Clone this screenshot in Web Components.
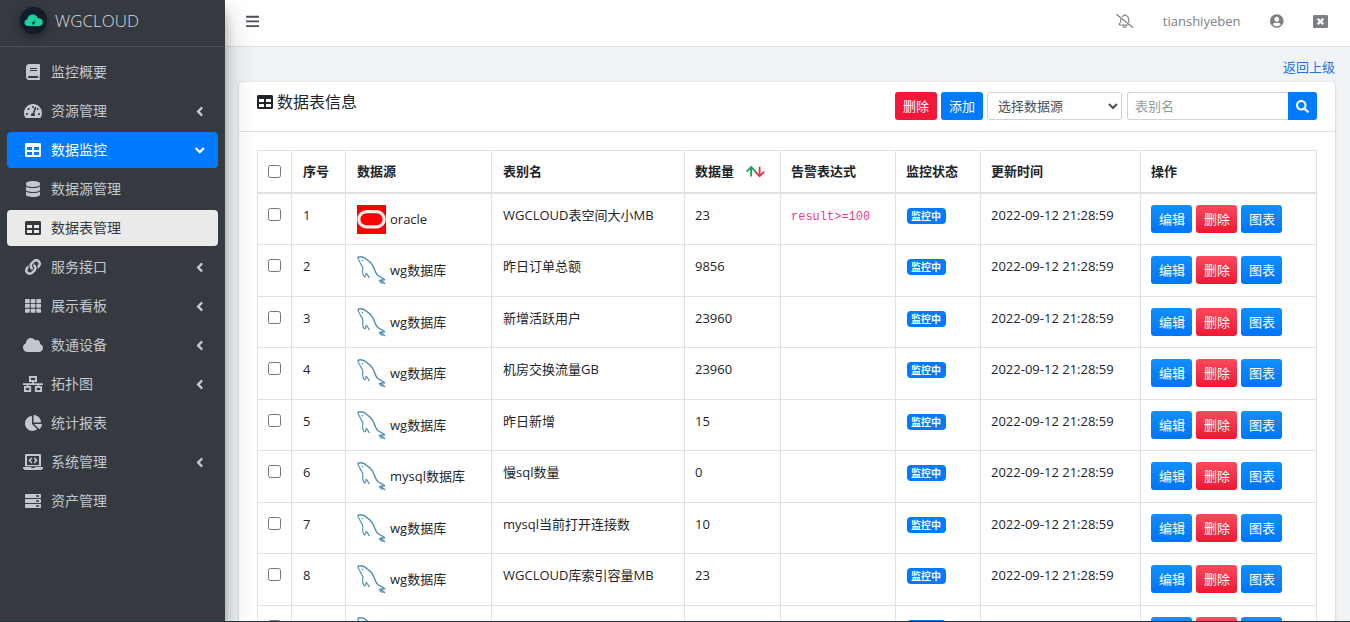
<!DOCTYPE html>
<html lang="zh-CN">
<head>
<meta charset="utf-8">
<title>WGCLOUD</title>
<style>
html, body { margin: 0; height: 100%; }
body { font: 13px/20px "Open Sans", "Noto Sans CJK SC", sans-serif; color: #212529; background: #f1f4f7; }
</style>
</head>
<body>
<wg-app>
  <wg-sidebar slot="side">
    <wg-nav-item icon="book">监控概要</wg-nav-item>
    <wg-nav-item icon="gauge" more>资源管理</wg-nav-item>
    <wg-nav-item icon="table" more state="open">数据监控</wg-nav-item>
    <wg-nav-item icon="database">数据源管理</wg-nav-item>
    <wg-nav-item icon="table" state="current">数据表管理</wg-nav-item>
    <wg-nav-item icon="link" more>服务接口</wg-nav-item>
    <wg-nav-item icon="grid" more>展示看板</wg-nav-item>
    <wg-nav-item icon="cloud" more>数通设备</wg-nav-item>
    <wg-nav-item icon="network" more>拓扑图</wg-nav-item>
    <wg-nav-item icon="pie">统计报表</wg-nav-item>
    <wg-nav-item icon="laptop" more>系统管理</wg-nav-item>
    <wg-nav-item icon="server">资产管理</wg-nav-item>
  </wg-sidebar>
  <wg-topbar slot="top">tianshiyeben</wg-topbar>
  <wg-card>
    <span slot="title">数据表信息</span>
    <wg-tools slot="tools"></wg-tools>
    <wg-table></wg-table>
  </wg-card>
</wg-app>

<script>
const ICONS = {
  book: [448, '<path d="M448 360V24c0-13.3-10.7-24-24-24H96C43 0 0 43 0 96v320c0 53 43 96 96 96h328c13.3 0 24-10.7 24-24v-16c0-7.5-3.5-14.3-8.9-18.7-4.2-15.4-4.2-59.3 0-74.7 5.4-4.3 8.9-11.1 8.9-18.6zM128 134c0-3.3 2.7-6 6-6h212c3.3 0 6 2.7 6 6v20c0 3.3-2.7 6-6 6H134c-3.3 0-6-2.7-6-6v-20zm0 64c0-3.3 2.7-6 6-6h212c3.3 0 6 2.7 6 6v20c0 3.3-2.7 6-6 6H134c-3.3 0-6-2.7-6-6v-20zm253.4 250H96c-17.7 0-32-14.3-32-32 0-17.6 14.4-32 32-32h285.4c-1.9 17.1-1.9 46.9 0 64z"/>'],
  gauge: [576, '<path d="M288 32C128.94 32 0 160.94 0 320c0 52.8 14.25 102.26 39.06 144.8 5.61 9.62 16.3 15.2 27.44 15.2h443c11.14 0 21.83-5.58 27.44-15.2C561.75 422.26 576 372.8 576 320c0-159.06-128.94-288-288-288zm0 64c14.71 0 26.58 10.13 30.32 23.65-1.11 2.26-2.64 4.23-3.45 6.67l-9.22 27.67c-5.13 3.49-10.97 6.01-17.64 6.01-17.67 0-32-14.33-32-32S270.33 96 288 96zM96 384c-17.67 0-32-14.33-32-32s14.33-32 32-32 32 14.33 32 32-14.33 32-32 32zm48-160c-17.67 0-32-14.33-32-32s14.33-32 32-32 32 14.33 32 32-14.33 32-32 32zm246.77-72.41l-61.33 184C343.13 347.33 352 364.54 352 384c0 11.72-3.38 22.55-8.88 32H232.88c-5.5-9.45-8.88-20.28-8.88-32 0-33.94 26.5-61.43 59.9-63.59l61.34-184.01c4.17-12.56 17.73-19.45 30.36-15.17 12.57 4.19 19.35 17.79 15.17 30.36zm14.66 57.2l15.52-46.55c3.47-1.29 7.13-2.23 11.05-2.23 17.67 0 32 14.33 32 32s-14.33 32-32 32c-11.38-.01-20.89-6.28-26.57-15.22zM480 384c-17.67 0-32-14.33-32-32s14.33-32 32-32 32 14.33 32 32-14.33 32-32 32z"/>'],
  table: [512, '<path d="M464 32H48C21.49 32 0 53.49 0 80v352c0 26.51 21.49 48 48 48h416c26.51 0 48-21.49 48-48V80c0-26.51-21.49-48-48-48zM224 416H64v-96h160v96zm0-160H64v-96h160v96zm224 160H288v-96h160v96zm0-160H288v-96h160v96z"/>'],
  database: [448, '<path d="M448 73.143v45.714C448 159.143 347.667 192 224 192S0 159.143 0 118.857V73.143C0 32.857 100.333 0 224 0s224 32.857 224 73.143zM448 176v102.857C448 319.143 347.667 352 224 352S0 319.143 0 278.857V176c48.125 33.143 136.208 48.572 224 48.572S399.874 209.143 448 176zm0 160v102.857C448 479.143 347.667 512 224 512S0 479.143 0 438.857V336c48.125 33.143 136.208 48.572 224 48.572S399.874 369.143 448 336z"/>'],
  link: [512, '<path d="M326.612 185.391c59.747 59.809 58.927 155.698.36 214.59-.11.12-.24.25-.36.37l-67.2 67.2c-59.27 59.27-155.699 59.262-214.96 0-59.27-59.26-59.27-155.7 0-214.96l37.106-37.106c9.84-9.84 26.786-3.3 27.294 10.606.648 17.722 3.826 35.527 9.69 52.721 1.986 5.822.567 12.262-3.783 16.612l-13.087 13.087c-28.026 28.026-28.905 73.66-1.155 101.96 28.024 28.579 74.086 28.749 102.325.51l67.2-67.19c28.191-28.191 28.073-73.757 0-101.83-3.701-3.694-7.429-6.564-10.341-8.569a16.037 16.037 0 0 1-6.947-12.606c-.396-10.567 3.348-21.456 11.698-29.806l21.054-21.055c5.521-5.521 14.182-6.199 20.584-1.731a152.482 152.482 0 0 1 20.522 17.197zM467.547 44.449c-59.261-59.262-155.69-59.27-214.96 0l-67.2 67.2c-.12.12-.25.25-.36.37-58.566 58.892-59.387 154.781.36 214.59a152.454 152.454 0 0 0 20.521 17.196c6.402 4.468 15.064 3.789 20.584-1.731l21.054-21.055c8.35-8.35 12.094-19.239 11.698-29.806a16.037 16.037 0 0 0-6.947-12.606c-2.912-2.005-6.64-4.875-10.341-8.569-28.073-28.073-28.191-73.639 0-101.83l67.2-67.19c28.239-28.239 74.3-28.069 102.325.51 27.75 28.3 26.872 73.934-1.155 101.96l-13.087 13.087c-4.35 4.35-5.769 10.79-3.783 16.612 5.864 17.194 9.042 34.999 9.69 52.721.509 13.906 17.454 20.446 27.294 10.606l37.106-37.106c59.271-59.259 59.271-155.699.001-214.959z"/>'],
  grid: [512, [32, 187, 341].map(y => [0, 181, 362].map(x => `<rect x="${x}" y="${y}" width="150" height="128" rx="20"/>`).join('')).join('')],
  cloud: [640, '<path d="M537.6 226.6c4.1-10.7 6.4-22.4 6.4-34.6 0-53-43-96-96-96-19.7 0-38.1 6-53.3 16.2C367 64.2 315.3 32 256 32c-88.4 0-160 71.6-160 160 0 2.7.1 5.4.2 8.1C40.2 219.8 0 273.2 0 336c0 79.5 64.5 144 144 144h368c70.7 0 128-57.3 128-128 0-61.9-44-113.6-102.4-125.4z"/>'],
  network: [640, '<g fill="none" stroke="currentColor" stroke-width="60"><rect x="222" y="30" width="196" height="132"/><rect x="62" y="350" width="168" height="132"/><rect x="410" y="350" width="168" height="132"/><path stroke-width="56" d="M0 256h640M320 170v86M146 256v90M494 256v90"/></g>'],
  pie: [544, '<path d="M527.79 288H290.5l158.03 158.03c6.04 6.04 15.98 6.53 22.19.68 38.7-36.46 65.32-85.61 73.13-140.86 1.34-9.46-6.51-17.85-16.06-17.85zm-15.83-64.8C503.72 103.74 408.26 8.28 288.8.04 279.68-.59 272 7.1 272 16.24V240h223.77c9.14 0 16.82-7.68 16.19-16.8zM224 288V50.71c0-9.55-8.39-17.4-17.84-16.06C86.99 51.49-4.1 155.6.14 280.37 4.5 408.51 114.83 513.59 243.03 511.98c50.4-.63 96.97-16.87 135.26-44.03 7.9-5.6 8.42-17.23 1.57-24.08L224 288z"/>'],
  laptop: [640, '<path d="M0 416h255c2 20 14 32 34 32h62c18 0 34-14 33-32h256v16c0 44-36 80-80 80H80c-44 0-80-36-80-80z"/><path fill="none" stroke="currentColor" stroke-width="64" stroke-linejoin="round" d="M96 384V32h448v352"/><path fill="none" stroke="currentColor" stroke-width="50" stroke-linecap="round" stroke-linejoin="round" d="M270 140l-65 65 65 65M370 140l65 65-65 65"/><path d="M64 352h512v40H64z"/>'],
  server: [512, '<path fill-rule="evenodd" d="M24 32h464a24 24 0 0 1 24 24v80a24 24 0 0 1-24 24H24a24 24 0 0 1-24-24V56a24 24 0 0 1 24-24zm330 40v48h94V72zM24 192h464a24 24 0 0 1 24 24v80a24 24 0 0 1-24 24H24a24 24 0 0 1-24-24v-80a24 24 0 0 1 24-24zm330 40v48h94v-48zM24 352h464a24 24 0 0 1 24 24v80a24 24 0 0 1-24 24H24a24 24 0 0 1-24-24v-80a24 24 0 0 1 24-24zm330 40v48h94v-48z"/>'],
  angle: [256, '<path d="M31.7 239l136-136c9.4-9.4 24.6-9.4 33.9 0l22.6 22.6c9.4 9.4 9.4 24.6 0 33.9L127.9 256l96.4 96.4c9.4 9.4 9.4 24.6 0 33.9L201.7 409c-9.4 9.4-24.6 9.4-33.9 0l-136-136c-9.5-9.4-9.5-24.6-.1-34z"/>'],
  bars: [448, [60, 220, 380].map(y => `<rect y="${y}" width="448" height="64" rx="16"/>`).join('')],
  search: [512, '<path d="M505 442.7L405.3 343c-4.5-4.5-10.6-7-17-7H372c27.6-35.3 44-79.7 44-128C416 93.1 322.9 0 208 0S0 93.1 0 208s93.1 208 208 208c48.3 0 92.7-16.4 128-44v16.3c0 6.4 2.5 12.5 7 17l99.7 99.7c9.4 9.4 24.6 9.4 33.9 0l28.3-28.3c9.4-9.4 9.4-24.6.1-34zM208 336c-70.7 0-128-57.2-128-128 0-70.7 57.2-128 128-128 70.7 0 128 57.2 128 128 0 70.7-57.2 128-128 128z"/>'],
  user: [496, '<path d="M248 8C111 8 0 119 0 256s111 248 248 248 248-111 248-248S385 8 248 8zm0 96c48.6 0 88 39.4 88 88s-39.4 88-88 88-88-39.4-88-88 39.4-88 88-88zm0 344c-58.7 0-111.3-26.6-146.5-68.2 18.8-35.4 55.6-59.8 98.5-59.8 2.4 0 4.8.4 7.1 1.1 13 4.2 26.6 6.9 40.9 6.9 14.3 0 28-2.7 40.9-6.9 2.3-.7 4.7-1.1 7.1-1.1 42.9 0 79.7 24.4 98.5 59.8C359.3 421.4 306.7 448 248 448z"/>'],
  close: [512, '<rect y="32" width="512" height="448" rx="48"/><path d="M160 160l192 192M352 160L160 352" stroke="#fff" stroke-width="76"/>'],
  bell: [640, '<g fill="none" stroke="currentColor" stroke-width="40" stroke-linecap="round" stroke-linejoin="round"><path d="M20 20l600 472M320 10v45M225 95c25-25 60-38 95-38 80 0 138 62 138 140 0 50 8 86 24 114M178 190c0 90-16 130-50 165-18 22-6 48 16 48h290M265 430c0 32 24 58 55 58s55-26 55-58"/></g>'],
  sort: [640, '<g fill="none" stroke-width="62"><path stroke="#1e9e54" d="M175 430V110M20 260l155-155 155 155"/><path stroke="#dc3545" d="M465 90v320M310 260l155 155 155-155"/></g>'],
  oracle: [512, '<path fill="#f00" d="M0 0h512v512H0z"/><rect x="32" y="116" width="448" height="270" rx="135" fill="none" stroke="#fdeee9" stroke-width="56"/>'],
  mysql: [512, '<g fill="none" stroke="#5590b0" stroke-width="26" stroke-linecap="round" stroke-linejoin="round"><path d="M22 22C85-2 145 35 185 72c85 45 112 120 140 205 14 40 28 66 65 82 35 14 70 32 98 60-32 2-58 2-75 12 22 18 54 28 73 56"/><path stroke-width="20" d="M22 22c-18 22 18 52 32 92 14 42 52 70 50 108-8 46-6 110 24 142 18 18 30-28 34-60 24 24 36 52 54 78M90 75l8 10M392 432c12 20 28 40 56 52"/></g>'],
  brand: [512, '<circle cx="256" cy="256" r="256" fill="#101c2a"/><path fill="#1fd1a0" d="M150 360c-40 0-66-28-66-64 0-34 22-60 54-66 6-50 50-86 104-86 48 0 86 28 98 70 50-4 92 28 92 74 0 42-34 72-76 72z"/><path fill="#0e3b3c" d="M280 216l-14 62h34l-48 66-32-54h30z"/>']
};

function define(name, html, setup) {
  const template = document.createElement('template');
  template.innerHTML = html;
  customElements.define(name, class extends HTMLElement {
    constructor() {
      super();
      this.attachShadow({ mode: 'open' }).append(template.content.cloneNode(true));
    }
    connectedCallback() { if (setup) setup(this, this.shadowRoot); }
  });
}

define('wg-icon', `<style>
  :host { display: inline-flex; flex: none; align-items: center; justify-content: center; height: var(--size, 16px); }
  svg { display: block; height: 100%; fill: currentColor; }
</style><svg aria-hidden="true"></svg>`, (el, root) => {
  const [width, body] = ICONS[el.getAttribute('name')];
  const svg = root.querySelector('svg');
  svg.setAttribute('viewBox', `0 0 ${width} 512`);
  svg.innerHTML = body;
});

define('wg-app', `<style>
  :host { display: grid; grid-template-columns: 225px minmax(0, 1fr); grid-template-rows: auto minmax(0, 1fr); height: 100vh; box-sizing: border-box; border-bottom: 1px solid #263238; overflow: hidden; }
  aside { grid-row: 1 / 3; z-index: 1; display: grid; }
  main { overflow: auto; scrollbar-width: none; padding: 10px 15px 15px 14px; }
  nav { display: flex; justify-content: flex-end; margin-bottom: 5px; }
  a { color: #1a73e8; text-decoration: none; }
</style>
<aside><slot name="side"></slot></aside>
<slot name="top"></slot>
<main><nav><a href="#">返回上级</a></nav><slot></slot></main>`);

define('wg-sidebar', `<style>
  :host { display: block; background: #343a40; color: #c2c7d0; box-shadow: 0 14px 28px rgba(0,0,0,.25), 0 10px 10px rgba(0,0,0,.22); }
  .brand { display: flex; align-items: center; gap: 8px; height: 47px; box-sizing: border-box; padding: 0 20px 5px; border-bottom: 1px solid #4b545c; margin-bottom: 7px; color: #d6d8da; font-size: 17px; font-weight: 300; text-decoration: none; }
  .brand wg-icon { --size: 27px; border-radius: 50%; box-shadow: 0 3px 8px rgba(0,0,0,.4); }
  nav { display: flex; flex-direction: column; gap: 3px; padding: 0 7px; }
</style>
<a class="brand" href="#"><wg-icon name="brand"></wg-icon><span>WGCLOUD</span></a>
<nav><slot></slot></nav>`);

define('wg-nav-item', `<style>
  :host { display: block; }
  a { display: flex; align-items: center; height: 36px; padding: 0 15px; border-radius: 4px; color: inherit; font-size: 14px; text-decoration: none; }
  .icon { display: flex; justify-content: center; width: 22px; margin-right: 7px; }
  .text { flex: 1; }
  .arrow { display: none; --size: 15px; }
  :host([more]) .arrow { display: inline-flex; }
  :host([state=open]) a { background: #007bff; color: #fff; }
  :host([state=open]) .arrow { transform: rotate(-90deg); }
  :host([state=current]) a { background: #ebebeb; color: #343a40; }
</style>
<a href="#"><span class="icon"></span><span class="text"><slot></slot></span><wg-icon class="arrow" name="angle"></wg-icon></a>`, (el, root) => {
  root.querySelector('.icon').innerHTML = `<wg-icon name="${el.getAttribute('icon')}"></wg-icon>`;
});

define('wg-topbar', `<style>
  :host { display: flex; align-items: center; height: 47px; box-sizing: border-box; padding: 0 22px 4px 21px; background: #fff; border-bottom: 1px solid #dee2e6; color: #7b7f83; }
  button { display: flex; padding: 0; border: 0; background: none; color: inherit; }
  .menu { margin-right: auto; color: #495057; --size: 15px; }
  .bell { margin-right: 29px; --size: 14px; }
  .user { margin: 0 29px 0 30px; --size: 14px; }
  .close { --size: 15px; }
</style>
<button class="menu" aria-label="菜单"><wg-icon name="bars"></wg-icon></button>
<button class="bell" aria-label="通知"><wg-icon name="bell"></wg-icon></button>
<span><slot></slot></span>
<button class="user" aria-label="用户"><wg-icon name="user"></wg-icon></button>
<button class="close" aria-label="退出"><wg-icon name="close"></wg-icon></button>`);

define('wg-card', `<style>
  :host { display: block; background: #fff; border-radius: 4px; box-shadow: 0 0 1px rgba(0,0,0,.13), 0 1px 3px rgba(0,0,0,.2); }
  header { display: flex; align-items: flex-start; justify-content: space-between; height: 28px; padding: 10px 18px 11px; border-bottom: 1px solid #dfe1e3; }
  h3 { display: flex; align-items: center; gap: 4px; margin: 0; font-size: 16px; font-weight: 400; line-height: 20px; }
  section { padding: 18px; }
</style>
<header><h3><wg-icon name="table"></wg-icon><slot name="title"></slot></h3><slot name="tools"></slot></header>
<section><slot></slot></section>`);

define('wg-button', `<style>
  :host { display: inline-flex; }
  button { height: 28px; padding: 0 8px; border: 0; border-radius: 3px; background: #007bff; color: #fff; font: inherit; line-height: 28px; white-space: nowrap; }
  :host([danger]) button { background: #f5173a; }
  :host([raised]) button { padding: 0 7px 0 8px; background: linear-gradient(#1090ff, #0074f5); }
  :host([raised][danger]) button { background: linear-gradient(#fa4a5c, #ef1733); }
</style><button type="button"><slot></slot></button>`);

define('wg-tools', `<style>
  :host { display: flex; gap: 4px; }
  select, input { height: 28px; box-sizing: border-box; border: 1px solid #ced4da; border-radius: 3px; background: #fff; color: #495057; font: inherit; }
  select { width: 135px; padding: 0 0 0 6px; }
  form { display: flex; margin-left: 1px; }
  input { width: 161px; padding: 0 7px; border-right: 0; border-radius: 3px 0 0 3px; }
  input::placeholder { color: #939ba2; }
  button { display: flex; align-items: center; justify-content: center; width: 29px; padding: 0; border: 0; border-radius: 0 3px 3px 0; background: #007bff; color: #fff; --size: 13px; }
</style>
<wg-button danger>删除</wg-button><wg-button>添加</wg-button>
<select aria-label="选择数据源"><option>选择数据源</option></select>
<form><input type="text" placeholder="表别名" aria-label="表别名"><button type="button" aria-label="搜索"><wg-icon name="search"></wg-icon></button></form>`);

const ROWS = [
  ['oracle', 'oracle', 'WGCLOUD表空间大小MB', 23, 'result>=100'],
  ['mysql', 'wg数据库', '昨日订单总额', 9856, ''],
  ['mysql', 'wg数据库', '新增活跃用户', 23960, ''],
  ['mysql', 'wg数据库', '机房交换流量GB', 23960, ''],
  ['mysql', 'wg数据库', '昨日新增', 15, ''],
  ['mysql', 'mysql数据库', '慢sql数量', 0, ''],
  ['mysql', 'wg数据库', 'mysql当前打开连接数', 10, ''],
  ['mysql', 'wg数据库', 'WGCLOUD库索引容量MB', 23, ''],
  ['mysql', 'wg数据库', 'WGCLOUD数据库大小', 23, '']
];

define('wg-table', `<style>
  :host { display: block; }
  table { width: 100%; table-layout: fixed; border-collapse: collapse; }
  th, td { box-sizing: border-box; padding: 11px 10px 10px; border: 1px solid #dee2e6; text-align: left; vertical-align: top; white-space: nowrap; }
  th { height: 42px; padding: 0 10px; border-bottom-width: 2px; font-weight: 700; vertical-align: middle; }
  td { height: 51px; }
  tr:nth-child(even) td { height: 52px; }
  th:nth-child(-n+4):not(:first-child), td:nth-child(-n+4):not(:first-child) { padding-left: 11px; }
  input { display: block; margin: 0; }
  td input { margin-top: 3px; }
  .source { display: flex; align-items: center; gap: 4px; height: 29px; --size: 29px; }
  .count { display: flex; align-items: center; gap: 12px; --size: 15px; }
  .badge { display: inline-block; margin-left: 1px; padding: 0 5px 0 4px; border-radius: 4px; background: #007bff; color: #fff; font-size: 10px; font-weight: 700; line-height: 16px; }
  code { color: #e83e8c; font: 12px/20px "Liberation Mono", monospace; }
  .actions { display: flex; gap: 4px; }
</style>
<table>
  <colgroup><col style="width:34px"><col style="width:54px"><col style="width:146px"><col><col style="width:96px"><col style="width:115px"><col style="width:85px"><col style="width:160px"><col style="width:176px"></colgroup>
  <thead><tr><th><input type="checkbox" aria-label="全选"></th><th>序号</th><th>数据源</th><th>表别名</th><th><span class="count">数据量<wg-icon name="sort"></wg-icon></span></th><th>告警表达式</th><th>监控状态</th><th>更新时间</th><th>操作</th></tr></thead>
  <tbody></tbody>
</table>`, (el, root) => {
  root.querySelector('tbody').innerHTML = ROWS.map(([icon, source, alias, count, rule], i) => `<tr>
    <td><input type="checkbox" aria-label="选择第${i + 1}行"></td><td>${i + 1}</td>
    <td><span class="source"><wg-icon name="${icon}"></wg-icon>${source}</span></td>
    <td>${alias}</td><td>${count}</td><td>${rule && `<code>${rule.replace('>', '&gt;')}</code>`}</td>
    <td><span class="badge">监控中</span></td><td>2022-09-12 21:28:59</td>
    <td><span class="actions"><wg-button raised>编辑</wg-button><wg-button raised danger>删除</wg-button><wg-button raised>图表</wg-button></span></td></tr>`).join('');
});
</script>
</body>
</html>
